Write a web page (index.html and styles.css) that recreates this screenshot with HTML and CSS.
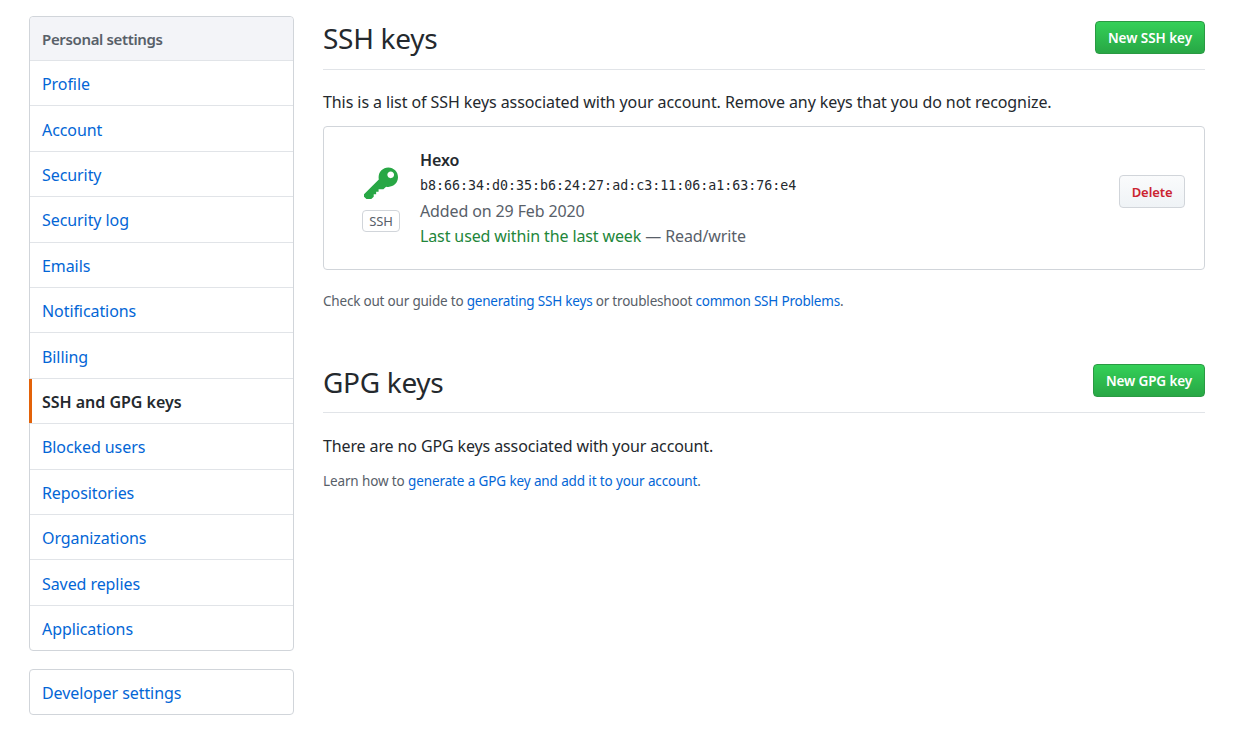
FILE: index.html
```html
<!DOCTYPE html>
<html lang="en">
<head>
<meta charset="utf-8">
<title>SSH and GPG keys</title>
<link rel="stylesheet" href="styles.css">
</head>
<body>
<div class="layout">
  <aside class="sidebar">
    <nav class="menu">
      <div class="menu-head">Personal settings</div>
      <a class="menu-item" href="#">Profile</a>
      <a class="menu-item" href="#">Account</a>
      <a class="menu-item" href="#">Security</a>
      <a class="menu-item" href="#">Security log</a>
      <a class="menu-item" href="#">Emails</a>
      <a class="menu-item" href="#">Notifications</a>
      <a class="menu-item" href="#">Billing</a>
      <a class="menu-item selected" href="#">SSH and GPG keys</a>
      <a class="menu-item" href="#">Blocked users</a>
      <a class="menu-item" href="#">Repositories</a>
      <a class="menu-item" href="#">Organizations</a>
      <a class="menu-item" href="#">Saved replies</a>
      <a class="menu-item" href="#">Applications</a>
    </nav>
    <nav class="menu dev">
      <a class="menu-item" href="#">Developer settings</a>
    </nav>
  </aside>
  <main class="content">
    <header class="subhead">
      <h2 class="subhead-title">SSH keys</h2>
      <a class="btn-new" href="#">New SSH key</a>
    </header>
    <p class="intro">This is a list of SSH keys associated with your account. Remove any keys that you do not recognize.</p>
    <div class="key-box">
      <div class="key-icon">
        <svg class="key-svg" viewBox="0 0 14 16" width="34" height="39" aria-hidden="true"><path fill-rule="evenodd" fill="#28a745" d="M12.83 2.17C12.08 1.42 11.14 1.03 10 1c-1.13.03-2.08.42-2.83 1.17S6.04 3.86 6.01 5c0 .3.03.59.09.89L0 12v1l1 1h2l1-1v-1h1v-1h1v-1h2l1.09-1.11c.3.08.59.11.91.11 1.14-.03 2.08-.42 2.83-1.17S13.97 6.14 14 5c-.03-1.14-.42-2.08-1.17-2.83zM11 5.38c-.77 0-1.38-.61-1.38-1.38 0-.77.61-1.38 1.38-1.38.77 0 1.38.61 1.38 1.38 0 .77-.61 1.38-1.38 1.38z"/></svg>
        <span class="ssh-label">SSH</span>
      </div>
      <div class="key-info">
        <strong class="key-name">Hexo</strong>
        <code class="key-fp">b8:66:34:d0:35:b6:24:27:ad:c3:11:06:a1:63:76:e4</code>
        <div class="key-line">Added on 29 Feb 2020</div>
        <div class="key-line"><span class="key-used">Last used within the last week</span> — Read/write</div>
      </div>
      <a class="btn-delete" href="#">Delete</a>
    </div>
    <p class="note">Check out our guide to <a href="#">generating SSH keys</a> or troubleshoot <a href="#">common SSH Problems</a>.</p>
    <header class="subhead gpg">
      <h2 class="subhead-title">GPG keys</h2>
      <a class="btn-new" href="#">New GPG key</a>
    </header>
    <p class="intro gpg-intro">There are no GPG keys associated with your account.</p>
    <p class="note gpg-note">Learn how to <a href="#">generate a GPG key and add it to your account</a>.</p>
  </main>
</div>
</body>
</html>
```
FILE: styles.css
```css
* { box-sizing: border-box; }
html, body { margin: 0; background: #fff; }
body {
  font-family: "Noto Sans", "Open Sans", sans-serif;
  font-size: 16px;
  color: #24292e;
  letter-spacing: -0.08px;
}
a { color: #0366d6; text-decoration: none; }
.layout {
  display: flex;
  align-items: flex-start;
  gap: 29px;
  width: 1176px;
  margin-left: 29px;
  padding-top: 16px;
}
.sidebar { width: 265px; flex: none; }
.menu {
  display: flex;
  flex-direction: column;
  background: #fff;
  border: 1px solid #d1d5da;
  border-radius: 4px;
}
.dev { margin-top: 18px; }
.dev .menu-item { height: 45px; padding-top: 1px; border-bottom: 0; }
.menu-head {
  height: 44px;
  display: flex;
  align-items: center;
  padding-left: 12px;
  background: #f3f4f8;
  border-bottom: 1px solid #e1e4e8;
  border-radius: 4px 4px 0 0;
  font-size: 15px;
  font-weight: 600;
  letter-spacing: -0.35px;
  color: #586069;
}
.menu-item {
  height: 45.4px;
  display: flex;
  align-items: center;
  padding: 2.2px 0 0 12px;
  border-bottom: 1px solid #e1e4e8;
}
.menu-item:last-child { height: 44.4px; border-bottom: 0; }
.menu-item.selected {
  position: relative;
  font-weight: 600;
  letter-spacing: -0.02px;
  color: #24292e;
}
.menu-item.selected::before {
  content: "";
  position: absolute;
  left: -1px;
  top: 0;
  bottom: 0;
  width: 3px;
  background: #e36209;
}
.content { flex: 1; min-width: 0; }
.subhead {
  display: flex;
  align-items: flex-start;
  justify-content: space-between;
  height: 54px;
  padding-top: 5px;
  border-bottom: 1px solid #e1e4e8;
}
.subhead.gpg { margin-top: 48px; }
.subhead.gpg .subhead-title { margin-top: 1px; }
.subhead.gpg .btn-new { padding: 1px 12px 0; letter-spacing: -0.12px; }
.subhead-title {
  margin: 0;
  font-size: 28px;
  font-weight: 400;
  line-height: 34px;
  letter-spacing: -0.3px;
}
.btn-new {
  display: flex;
  align-items: center;
  height: 33px;
  padding: 0 12px;
  border: 1px solid #2a9a43;
  border-radius: 4px;
  background: linear-gradient(#34d058, #28a745);
  color: #fff;
  font-size: 13.5px;
  font-weight: 600;
  letter-spacing: -0.05px;
}
.intro { margin: 20px 0 0; line-height: 24px; }
.gpg-intro { margin-top: 21px; letter-spacing: -0.12px; }
.key-box {
  display: flex;
  align-items: center;
  height: 144px;
  margin-top: 12px;
  padding: 0 19px 0 38px;
  border: 1px solid #d1d5da;
  border-radius: 4px;
}
.key-icon {
  width: 38px;
  display: flex;
  flex-direction: column;
  align-items: center;
  gap: 6px;
  margin-right: 20px;
}
.key-svg { display: block; }
.ssh-label {
  display: block;
  height: 22px;
  width: 38px;
  line-height: 20px;
  text-align: center;
  border: 1px solid #d1d5da;
  border-radius: 4px;
  font-size: 13px;
  color: #586069;
}
.key-info { flex: 1; padding-top: 1px; color: #586069; }
.key-name {
  display: block;
  font-weight: 600;
  line-height: 24px;
  color: #24292e;
}
.key-fp {
  display: block;
  font-family: "DejaVu Sans Mono", "Liberation Mono", monospace;
  font-size: 13.3px;
  line-height: 27px;
  letter-spacing: 0;
  color: #24292e;
}
.key-line { line-height: 25px; letter-spacing: -0.12px; }
.key-used { color: #22863a; }
.btn-delete {
  display: flex;
  align-items: center;
  height: 33px;
  margin-bottom: 14px;
  padding: 1px 11.5px 0;
  border: 1px solid #d1d5da;
  border-radius: 4px;
  background: linear-gradient(#fafbfc, #eff3f6);
  color: #cb2431;
  font-size: 13px;
  font-weight: 600;
}
.note {
  margin: 21px 0 0;
  font-size: 13.5px;
  line-height: 20px;
  letter-spacing: -0.2px;
  color: #586069;
}
.gpg-note { margin-top: 13px; letter-spacing: -0.12px; }
```
